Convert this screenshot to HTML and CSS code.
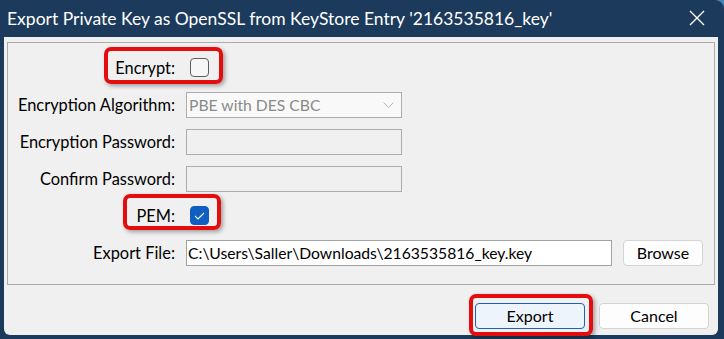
FILE: index.html
```html
<!DOCTYPE html>
<html lang="en">
<head>
  <meta charset="UTF-8">
  <title>Export Private Key as OpenSSL</title>
  <link rel="stylesheet" href="styles.css">
</head>
<body>
  <div class="window">
    <div class="titlebar">
      <span class="title">Export Private Key as OpenSSL from KeyStore Entry '2163535816_key'</span>
      <svg class="close" width="16" height="16" viewBox="0 0 16 16">
        <path d="M1 1 L15 15 M15 1 L1 15" stroke="#fff" stroke-width="1.4" fill="none"/>
      </svg>
    </div>

    <div class="content">
      <div class="panel">
        <label>Encrypt:</label>
        <div class="cell"><span class="check"></span></div>

        <label>Encryption Algorithm:</label>
        <div class="cell">
          <div class="combo">
            <span>PBE with DES CBC</span>
            <svg width="11" height="6" viewBox="0 0 11 6"><path d="M0.5 0.5 L5.5 5.5 L10.5 0.5" stroke="#b5b5b5" fill="none"/></svg>
          </div>
        </div>

        <label>Encryption Password:</label>
        <div class="cell"><div class="field disabled"></div></div>

        <label>Confirm Password:</label>
        <div class="cell"><div class="field disabled"></div></div>

        <label>PEM:</label>
        <div class="cell">
          <span class="check on">
            <svg width="11" height="8" viewBox="0 0 11 8"><path d="M1 4 L4 7 L10 1" stroke="#fff" stroke-width="1.1" fill="none"/></svg>
          </span>
        </div>

        <label>Export File:</label>
        <div class="cell file-row">
          <div class="field file">C:\Users\Saller\Downloads\2163535816_key.key</div>
          <button class="btn browse">Browse</button>
        </div>

        <span class="mark mark-encrypt"></span>
        <span class="mark mark-pem"></span>
      </div>

      <div class="actions">
        <div class="highlight">
          <button class="btn primary">Export</button>
          <span class="mark mark-export"></span>
        </div>
        <button class="btn">Cancel</button>
      </div>
    </div>
  </div>
</body>
</html>
```

FILE: styles.css
```css
body {
  margin: 0;
  background-color: #3f86b3;
  font-family: Lato, "Open Sans", sans-serif;
}
.window {
  width: 724px;
  height: 339px;
  background-color: #1b3a5c;
  border-radius: 0 9px 0 0;
  display: flex;
  flex-direction: column;
  box-sizing: border-box;
  padding: 0 6px 4px 4px;
}
.titlebar {
  height: 37px;
  display: flex;
  align-items: center;
  justify-content: space-between;
  color: white;
  padding: 0 13px 0 3px;
}
.title {
  font-size: 17.5px;
  margin-top: -1px;
  white-space: nowrap;
}
.close {
  margin-top: -1px;
}
.content {
  flex: 1;
  background-color: #f0f0f0;
  border-radius: 0 0 6px 6px;
  padding: 5px 3px 0 3px;
  display: flex;
  flex-direction: column;
}
.panel {
  position: relative;
  border: 1px solid #acacac;
  height: 235px;
  box-sizing: content-box;
  display: grid;
  grid-template-columns: 167px 1fr;
  grid-template-rows: repeat(6, 37px);
  column-gap: 11px;
  padding: 6px 12px 0 0;
  font-size: 16.4px;
  line-height: 20px;
}
label {
  text-align: right;
  align-self: center;
  color: #000;
  white-space: nowrap;
}
.cell {
  display: flex;
  align-items: center;
}
.check {
  width: 17px;
  height: 17px;
  margin-left: 4px;
  border: 1px solid #5e5e5e;
  border-radius: 4px;
  background-color: #f7f7f7;
  display: flex;
  align-items: center;
  justify-content: center;
}
.check.on {
  background-color: #0f5fc2;
  border-color: #0f5fc2;
}
.combo, .field {
  width: 216px;
  height: 26px;
  box-sizing: border-box;
  border: 1px solid #adadad;
  font-size: 15.7px;
}
.combo {
  background-color: #f9f9f9;
  color: #8a8a8a;
  display: flex;
  align-items: center;
  justify-content: space-between;
  padding: 0 7px 0 2px;
}
.field.disabled {
  background-color: #f0f0f0;
}
.file-row {
  gap: 11px;
}
.field.file {
  width: 426px;
  background-color: #fff;
  border-color: #a2a2a2;
  padding: 2px 0 0 1px;
  white-space: nowrap;
}
.btn {
  font-family: inherit;
  font-size: 16px;
  height: 26px;
  width: 110px;
  background-color: #fdfdfd;
  border: 1px solid #d4d4d4;
  border-radius: 4px;
  color: #000;
  padding: 0;
  line-height: 20px;
}
.browse {
  width: 80px;
}
.primary {
  background-color: #eef4fb;
  border-color: #1c63b7;
}
.actions {
  display: flex;
  justify-content: flex-end;
  gap: 14px;
  padding: 18px 6px 0 0;
}
.highlight {
  position: relative;
  display: flex;
}
.mark {
  position: absolute;
  border: 4px solid #e30d0d;
  border-radius: 7px;
  box-shadow: 2px 2px 4px rgba(0, 0, 0, 0.35);
  box-sizing: border-box;
}
.mark-encrypt {
  left: 96px;
  top: 4px;
  width: 119px;
  height: 37px;
}
.mark-pem {
  left: 115px;
  top: 151px;
  width: 98px;
  height: 36px;
}
.mark-export {
  left: -6px;
  right: -8px;
  top: -9px;
  bottom: -7px;
}
```
